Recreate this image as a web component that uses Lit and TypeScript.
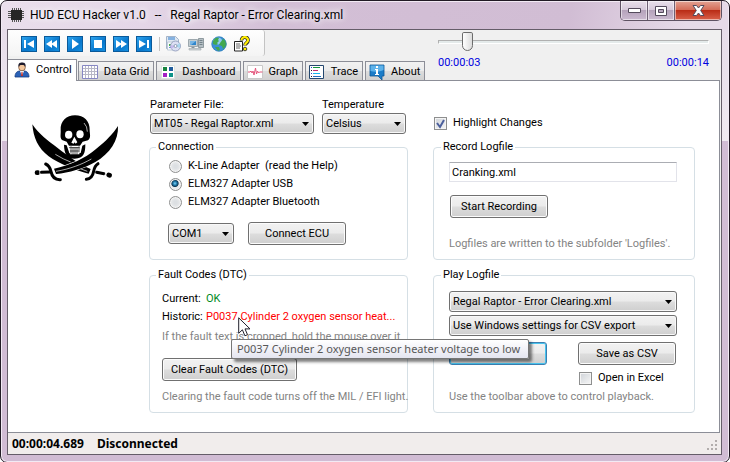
import { LitElement, html, css, svg } from "lit";
import { customElement, property, state } from "lit/decorators.js";
import { classMap } from "lit/directives/class-map.js";

const mediaGlyphs: [string, unknown][] = [
  ["First", svg`<path d="M3 4h2v8H3zM13 4v8L6 8z"/>`],
  ["Rewind", svg`<path d="M8 4v8L2 8zM13 4v8L7 8z"/>`],
  ["Play", svg`<path d="M5 3v10l7-5z"/>`],
  ["Stop", svg`<path d="M4 4h8v8H4z"/>`],
  ["Forward", svg`<path d="M3 4v8l6-4zM8 4v8l6-4z"/>`],
  ["Last", svg`<path d="M3 4v8l7-4zM11 4h2v8h-2z"/>`],
];

const toolGlyphs: [string, unknown][] = [
  ["Save log", svg`
    <path d="M1.500.5h9l3 3v9h-12z" fill="#dfe8f2" stroke="#8fa3bd" stroke-width=".8"/>
    <path d="M3 1h7v3H3z" fill="#86b2e0"/><path d="M2.500 6h7v8h-7z" fill="#f8fafc" stroke="#b3c1d2" stroke-width=".8"/>
    <path d="M4 8h2v2H4z" fill="#46b04a"/><path d="M4 11h2v1H4z" fill="#5a8fd6"/>
    <circle cx="10.500" cy="10" r="5" fill="#dcdff4" stroke="#8894b4" stroke-width=".8"/>
    <path d="M10.500 10l4-3a5 5 0 0 1 0 5z" fill="#a9d6ee"/><path d="M10.500 10l-4 3a5 5 0 0 1-1-4z" fill="#c5b9ec"/>
    <circle cx="10.500" cy="10" r="1.500" fill="#fff" stroke="#7787a4" stroke-width=".8"/>`],
  ["Computer", svg`
    <path d="M.5 3.500h9v7h-9z" fill="#c2ccd1" stroke="#8d999f" stroke-width=".8"/><path d="M2 5h6v4H2z" fill="#2f86cc"/>
    <path d="M2 5h6L3 9H2z" fill="#77b5e4"/><path d="M3.500 11h3v1h-3z" fill="#889299"/>
    <path d="M1 12.500h12v1.500H1z" fill="#d3d8da" stroke="#9aa4a9" stroke-width=".6"/>
    <path d="M10.500 2.500h5v9h-5z" fill="#b4bec3" stroke="#7e8a90" stroke-width=".8"/><path d="M11.500 4.500h3M11.500 6.500h3M11.500 8.500h3" stroke="#64737b" stroke-width=".8"/>`],
  ["Web", svg`
    <circle cx="8" cy="8" r="7.500" fill="#3a8fd6"/><ellipse cx="6.500" cy="5" rx="4.500" ry="3.500" fill="#8cc9f2"/>
    <path d="M2 5c2-4 5-4 6-3l-1 2 1 1-2 2 1 1-2 1-3-1zM9 7l3-4c3 1 4 5 3 7l-3 3-1-3-3-1zM4 11l4 0 1 3-2 1z" fill="#42a84f"/>
    <circle cx="8" cy="8" r="7.200" fill="none" stroke="#3580b4" stroke-width=".6"/>`],
  ["Help", svg`
    <path d="M.5 5.500h8v9.500h-8z" fill="#fff" stroke="#222"/><path d="M2 8h4M2 10h5M2 12h4" stroke="#555" stroke-width=".9"/>
    <path d="M7.500 4.500c0-5 7-4 6.500 0c0 2.500-3 2.500-3 5" fill="none" stroke="#222" stroke-width="3.600"/>
    <path d="M7.500 4.200c0-4.500 7-3.500 6.500 0c0 2.500-3 2.500-3 5" fill="none" stroke="#ffec00" stroke-width="2.200"/>
    <circle cx="11" cy="13" r="1.800" fill="#ffec00" stroke="#222" stroke-width=".8"/>`],
];

const tabs: [string, unknown][] = [
  ["Control", svg`
    <path d="M1 15c0-4 2-6 5-6h4c3 0 5 2 5 6z" fill="#2a62b8" stroke="#163c80" stroke-width=".8"/>
    <path d="M6 9l2 5 2-5z" fill="#fff"/><path d="M7.500 10h1l.5 4H7z" fill="#c03028"/>
    <circle cx="8" cy="5.500" r="3.300" fill="#f3c79d" stroke="#6b4326" stroke-width=".7"/>
    <path d="M4.400 5C4 1 6 .5 8 .5s4 .5 3.600 4.500L10 3H6z" fill="#1d1a2c"/>`],
  ["Data Grid", svg`
    <path d="M.5 1.500h15v13H.5z" fill="#fff" stroke="#8687c4"/>
    <path d="M3.500 2v12M6.500 2v12M9.500 2v12M12.500 2v12M1 4.500h14M1 7.500h14M1 10.500h14" stroke="#b7b7c6" fill="none"/>`],
  ["Dashboard", svg`
    <path d="M1.500 1.500h13v13h-13z" fill="#fff" stroke="#dce3e0"/>
    <path d="M3 3h4v4H3z" fill="#17843f"/><path d="M9 3h4v4H9z" fill="#205c9c"/>
    <path d="M3 9h4v4H3z" fill="#a31fc4"/><path d="M9 9h4v4H9z" fill="#0d9488"/>`],
  ["Graph", svg`
    <path d="M.5 1.500h15v13H.5z" fill="#fff" stroke="#c9c9c9"/>
    <path d="M1 8h2l1-1 1 2 1-2 1 4 1.500-7 1 6 1-3 1 2 1-1h3" fill="none" stroke="#e4567c"/>`],
  ["Trace", svg`
    <path d="M.5 1.500h14v13H.5z" fill="#fff" stroke="#24476e"/>
    <path d="M2 3.500h1M2 9.500h1" stroke="#2a3fd0"/><path d="M2 6.500h1M2 12.500h1" stroke="#222"/>
    <path d="M4 3.500h7" stroke="#12963a"/><path d="M4 6.500h5" stroke="#c03070"/><path d="M4 9.500h7" stroke="#18b6ee"/><path d="M4 12.500h8" stroke="#1f6fc0"/>`],
  ["About", svg`
    <path d="M1 1h14v11h-2v4l-4-4H1z" fill="#1b7cc8" stroke="#0e5794" stroke-width=".8"/>
    <path d="M1.500 1.500h13V6c-4 2-9 2-13 1z" fill="#5db2ea"/>
    <path d="M7 2h2v2H7zM6 5h3v5h1v1H6v-1h1V6H6z" fill="#fff"/>`],
];

@customElement("drop-list")
export class DropList extends LitElement {
  @property() label = "";
  @property({ attribute: false }) options: string[] = [];
  static styles = css`
    :host { display: grid; min-width: 0; }
    select {
      grid-area: 1 / 1; appearance: none; box-sizing: border-box; width: 100%; height: 21px; margin: 0;
      padding: 1px 16px 0 3px; border: 1px solid #707070; border-radius: 3px; color: #000;
      font: 11px/16px Roboto, "Liberation Sans", sans-serif;
      background: linear-gradient(#f2f2f2, #ebebeb 49%, #dddddd 51%, #cfcfcf);
      box-shadow: inset 0 0 0 1px #f8f8f8;
    }
    svg { grid-area: 1 / 1; place-self: center end; margin-right: 5px; pointer-events: none; }
  `;
  render() {
    return html`<select aria-label=${this.label}>${this.options.map((o) => html`<option>${o}</option>`)}</select>
      <svg width="7" height="4" viewBox="0 0 7 4"><path d="M0 0h7L3.500 4z"/></svg>`;
  }
}

@customElement("app-root")
export class AppRoot extends LitElement {
  @state() private activeTab = "Control";

  static styles = css`
    :host { display: block; background: #fff; color: #000; font: 11px/16px Roboto, "Liberation Sans", sans-serif; }
    * { box-sizing: border-box; }
    .window {
      display: flex; flex-direction: column; min-height: 100vh; padding: 0 7px 7px 6px;
      border: 1px solid #211a24; border-radius: 7px;
      background: linear-gradient(100deg, #eadfec 0, #e4d6e7 20%, #d3bfd6 38%, #d1bdd4 78%, #e6dae8 94%) 0 0 / 100% 28px no-repeat,
        linear-gradient(#e4d8e7, #f0eaf1 140px, #d1bcd4 140px);
      box-shadow: inset 0 0 0 1px #f2eaf4;
    }
    .titlebar { display: flex; align-items: flex-start; height: 28px; padding-left: 1px; }
    .chip { margin-top: 6px; flex: none; }
    .title {
      flex: 1; min-width: 0; margin: 0; padding: 4px 0 4px 6px; white-space: pre; overflow: hidden;
      font: 12px/20px Roboto, sans-serif;
      text-shadow: 0 0 6px #fff, 0 0 9px #fff;
    }
    .caption { display: flex; border: 1px solid #5e5263; border-top: 0; border-radius: 0 0 5px 5px; overflow: hidden; }
    .caption button {
      width: 27px; height: 19px; padding: 0; border: 0; border-right: 1px solid #6d5f73; display: grid; place-items: center;
      background: linear-gradient(#e9e0eb, #d5c8d9 48%, #b5a3bb 50%, #cbbad0);
      box-shadow: inset 0 0 0 1px #ffffff88;
    }
    .caption .close { width: 46px; border-right: 0; background: linear-gradient(#e3a394, #d46a55 48%, #ba2d17 50%, #d9614a); }
    .client { flex: 1; display: flex; flex-direction: column; border: 1px solid #655d69; background: #f0f0f0; }
    .header { display: grid; grid-template-columns: 430px minmax(0, 1fr); }
    .toolbar {
      display: flex; gap: 7px; align-items: center; width: 257px; height: 26px; padding: 2px 0 0 13px; margin-bottom: 3px;
      border-right: 1px solid #c3c3c3; border-radius: 0 3px 3px 0; background: linear-gradient(#fefefe, #f4f4f4);
    }
    .toolbar button { width: 16px; height: 16px; padding: 0; border: 0; background: none; flex: none; }
    .toolbar .media { border: 1px solid #0a5a9a; background: linear-gradient(135deg, #2da4ee, #0877cc 60%, #1590e0); }
    .toolbar svg { display: block; }
    .media svg { margin: -1px; fill: #fff; }
    .divider { width: 1px; height: 14px; margin-right: -2px; background: #c2c2c2; }
    .tabs { display: flex; align-items: flex-end; gap: 2px; }
    .tab {
      display: flex; align-items: center; gap: 6px; height: 19px; padding: 1px 4px 0 3px; margin: 0; color: #000;
      border: 1px solid #8c8e97; border-bottom: 0; font: inherit; white-space: nowrap;
      background: linear-gradient(#f2f2f2, #ebebeb 49%, #dddddd 51%, #d0d0d0);
    }
    .tab.active { height: 22px; padding: 0 4px 2px 6px; margin: 0 -1px -1px 0; border-left: 0; background: #fff; position: relative; }
    .seek { padding: 2px 12px 0 0; color: #0000e0; }
    .seek input { appearance: none; display: block; width: 100%; height: 20px; margin: 0; background: none; }
    .seek input::-webkit-slider-runnable-track { height: 4px; border: 1px solid #fff; border-top-color: #b0b0b0; border-left-color: #b0b0b0; background: #e4eaea; }
    .seek input::-webkit-slider-thumb {
      appearance: none; width: 11px; height: 19px; margin-top: -9px; background: linear-gradient(90deg, #fff, #dcdcdc);
      border: 1px solid #6c6c6c; border-radius: 2px 2px 6px 6px;
    }
    .times { display: flex; justify-content: space-between; padding-top: 3px; }
    .page { flex: 1; margin-right: 1px; padding: 16px 24px 19px 0; border: solid #8c8e97; border-width: 1px 1px 1px 0; background: #fff; display: grid; grid-template-columns: 141px minmax(0, 1fr); align-content: start; }
    .logo { margin: 16px 0 0 22px; }
    .pair { display: grid; grid-template-columns: minmax(0, 259fr) minmax(0, 262fr); gap: 8px 25px; }
    .params { display: grid; grid-template-columns: 164fr 84fr; gap: 0 8px; padding: 0 2px 0 1px; }
    .highlight { align-self: end; padding: 0 0 3px 1px; }
    .check { display: flex; align-items: center; gap: 6px; }
    .groups { margin-top: 6px; }
    fieldset { min-width: 0; margin: 0; border: 1px solid #d5dfe5; border-radius: 4px; }
    fieldset.upper { min-height: 120px; }
    fieldset.lower { min-height: 145px; }
    legend { margin-left: -8px; padding: 0 2px; line-height: 14px; }
    fieldset.connection { padding: 3px 18px 0; }
    .connection legend { margin-left: -12px; }
    .radio { display: flex; align-items: center; gap: 6px; height: 18px; padding-left: 1px; }
    input[type="radio"] {
      appearance: none; width: 13px; height: 13px; margin: 0; border: 1px solid #8e8f8f; border-radius: 50%;
      background: radial-gradient(#dcdfe2 20%, #f4f4f4); box-shadow: inset 0 0 0 1px #f4f4f4;
    }
    input[type="radio"]:checked { background: radial-gradient(circle at 45% 40%, #7fd4f7 0, #1a74a5 22%, #123a55 36%, #e6e9eb 46%); }
    input[type="checkbox"] {
      appearance: none; display: grid; width: 13px; height: 13px; margin: 0; border: 1px solid #8e8f8f;
      background: linear-gradient(135deg, #cfd3d8, #f6f6f6); box-shadow: inset 0 0 0 1px #f4f4f4;
    }
    .tick { display: grid; }
    .tick > * { grid-area: 1 / 1; }
    .tick svg { pointer-events: none; }
    .push {
      width: 98px; height: 23px; margin: 0; padding: 1px 0 0; border: 1px solid #707070; border-radius: 3px; font: inherit; color: #000; white-space: nowrap;
      background: linear-gradient(#f2f2f2, #ebebeb 49%, #dddddd 51%, #cfcfcf); box-shadow: inset 0 0 0 1px #fcfcfc;
    }
    .push.wide { width: 135px; }
    .push.focused { border-color: #3c7fb1; box-shadow: inset 0 0 0 1px #48c4ee; }
    .connect { display: flex; align-items: center; gap: 14px; margin-top: 11px; }
    .connect drop-list { width: 66px; }
    .hint { margin: 0; color: #838383; white-space: nowrap; }
    fieldset.record { padding: 8px 17px 0 15px; }
    .record input { display: block; width: 100%; height: 20px; padding: 0 2px; border: 1px solid #e2e3ea; border-top-color: #abadb3; font: inherit; color: #000; outline: 0; }
    .record .push { display: block; margin: 13px 0 18px 1px; }
    fieldset.faults { padding: 8px 0 0 12px; }
    .faults legend { margin-left: -6px; }
    .faults dl { display: grid; grid-template-columns: 44px minmax(0, 1fr); margin: 0 0 3px; line-height: 18px; white-space: nowrap; }
    .faults dd { margin: 0; }
    .ok { color: #008a1e; }
    .error { position: relative; color: #f00; }
    .faults .push { display: block; margin: 13px 0 8px; }
    .tooltip {
      position: absolute; left: 25px; top: 31px; z-index: 2; height: 20px; padding: 0 8px 0 5px; border: 1px solid #767676; border-radius: 2px;
      font: 11px/18px "Noto Sans", sans-serif; color: #575757; background: linear-gradient(#fff, #e4e5f0); box-shadow: 3px 3px 3px #00000080;
    }
    .cursor { position: absolute; left: 32px; top: 9px; z-index: 3; }
    fieldset.play { padding: 9px 17px 0 15px; }
    .play .lists { display: grid; gap: 3px; margin-bottom: 6px; }
    .play .actions { display: flex; justify-content: space-between; padding-right: 1px; }
    .play .check { width: 98px; margin: 5px 0 3px auto; }
    .status { display: flex; gap: 13px; align-items: center; height: 21px; padding: 0 4px; background: #f1edec; font: bold 12px/16px "Noto Sans", sans-serif; }
    .grip { margin: 4px -2px 0 auto; }
  `;

  private icon(glyph: unknown) {
    return html`<svg width="16" height="16" viewBox="0 0 16 16">${glyph}</svg>`;
  }

  private skull() {
    return html`<svg class="logo" width="90" height="70" viewBox="90 68 270 210" role="img" aria-label="Skull and crossed sabres">
      <path d="M97 102C116 130 144 152 172 172C205 198 240 222 272 236L266 250C225 240 176 220 146 198C114 174 100 142 97 102Z"/>
      <path d="M166 192Q190 207 212 215M232 232L262 243" stroke="#fff" stroke-width="2" fill="none"/>
      <path d="M354 107C356 150 330 190 286 215C248 236 208 247 168 251L162 235C210 225 254 205 288 176C318 152 338 132 354 107Z" stroke="#fff" stroke-width="4" paint-order="stroke"/>
      <path d="M168 243C210 236 246 222 274 206" stroke="#fff" stroke-width="2" fill="none"/>
      <g fill="none" stroke="#000" stroke-linecap="round">
        <path d="M137 221Q149 226 153 244Q158 269 181 268" stroke-width="9"/>
        <path d="M294 220Q284 226 281 243Q277 266 259 267" stroke-width="9"/>
        <path d="M124 246L150 245M290 246L312 250" stroke-width="9"/>
        <path d="M111 247h3M326 254l3 1" stroke-width="14"/>
      </g>
      <path d="M119 239v15M318 243l-4 15" stroke="#fff" stroke-width="2"/>
      <path d="M182 120C180 92 200 75 225 75C252 75 270 92 269 120C269 132 274 142 264 150L248 154L240 166L207 166L200 154L186 149C179 142 183 132 182 120Z"/>
      <path d="M192 163L200 165L208 188L242 188L247 166L256 162C256 188 252 204 224 205C199 204 193 190 192 163Z"/>
      <path d="M204 168h38l-4 24h-28z" fill="#fff"/>
      <path d="M207 172h32M210 182h26M213 168v22M219 170v22M225 170v22M231 170v22M237 168v18" stroke="#000" stroke-width="2"/>
      <ellipse cx="206" cy="133" rx="11" ry="12" fill="#fff"/><ellipse cx="240" cy="132" rx="11" ry="12" fill="#fff"/>
      <path d="M223 139L214 157L221 160L224 156L227 160L232 156Z" fill="#fff"/>
      <path d="M252 98Q262 108 262 124" stroke="#fff" stroke-width="2" fill="none"/>
    </svg>`;
  }

  private check(label: string, checked: boolean) {
    return html`<label class="check"><span class="tick"><input type="checkbox" .checked=${checked}>
      ${checked ? html`<svg width="13" height="13" viewBox="0 0 13 13"><path d="M3 6l3 4 4-7" fill="none" stroke="#4b5f9c" stroke-width="2"/></svg>` : ""}
      </span>${label}</label>`;
  }

  render() {
    return html`<div class="window">
      <header class="titlebar">
        <svg class="chip" width="16" height="16" viewBox="0 0 16 16">
          <path d="M4.500 1v14M6.500 1v14M8.500 1v14M10.500 1v14M12.500 1v14M0 4.500h16M0 6.500h16M0 8.500h16M0 10.500h16" stroke="#555" fill="none"/>
          <path d="M3 3h11v10H3z" fill="#262626"/>
        </svg>
        <h1 class="title">HUD ECU Hacker v1.0   --   Regal Raptor - Error Clearing.xml</h1>
        <div class="caption">
          <button aria-label="Minimize"><svg width="13" height="6" viewBox="0 0 13 6"><path d="M.5.5h12v4H.5z" fill="#fff" stroke="#544b5c"/></svg></button>
          <button aria-label="Maximize"><svg width="12" height="10" viewBox="0 0 12 10"><path d="M.5.5h11v9H.5zM3.500 3.500v3h5v-3z" fill="#fff" fill-rule="evenodd" stroke="#544b5c"/></svg></button>
          <button class="close" aria-label="Close"><svg width="13" height="11" viewBox="0 0 13 11"><path d="M1 .5h3.500l2 2.500 2-2.500H12L8.700 5.500 12 10.500H8.500l-2-2.500-2 2.500H1l3.300-5z" fill="#fff" stroke="#544b5c"/></svg></button>
        </div>
      </header>
      <div class="client">
        <div class="header">
          <div>
            <div class="toolbar">
              ${mediaGlyphs.map(([n, g]) => html`<button class="media" aria-label=${n}>${this.icon(g)}</button>`)}
              <span class="divider"></span>
              ${toolGlyphs.map(([n, g]) => html`<button aria-label=${n}>${this.icon(g)}</button>`)}
            </div>
            <nav class="tabs" role="tablist">
              ${tabs.map(([n, g]) => html`<button role="tab" class=${classMap({ tab: true, active: n === this.activeTab })}
                aria-selected=${n === this.activeTab} @click=${() => (this.activeTab = n)}>${this.icon(g)}${n}</button>`)}
            </nav>
          </div>
          <div class="seek">
            <input type="range" aria-label="Playback position" min="0" max="1000" value="88">
            <div class="times"><span>00:00:03</span><span>00:00:14</span></div>
          </div>
        </div>
        <main class="page">
          ${this.skull()}
          <div>
            <div class="pair">
              <div class="params">
                <span>Parameter File:</span><span>Temperature</span>
                <drop-list label="Parameter File" .options=${["MT05 - Regal Raptor.xml"]}></drop-list>
                <drop-list label="Temperature" .options=${["Celsius", "Fahrenheit"]}></drop-list>
              </div>
              <div class="highlight">${this.check("Highlight Changes", true)}</div>
            </div>
            <div class="pair groups">
              <fieldset class="upper connection">
                <legend>Connection</legend>
                <label class="radio"><input type="radio" name="adapter">K-Line Adapter&nbsp; (read the Help)</label>
                <label class="radio"><input type="radio" name="adapter" checked>ELM327 Adapter USB</label>
                <label class="radio"><input type="radio" name="adapter">ELM327 Adapter Bluetooth</label>
                <div class="connect">
                  <drop-list label="Port" .options=${["COM1"]}></drop-list>
                  <button class="push">Connect ECU</button>
                </div>
              </fieldset>
              <fieldset class="upper record">
                <legend>Record Logfile</legend>
                <input type="text" aria-label="Logfile name" value="Cranking.xml">
                <button class="push">Start Recording</button>
                <p class="hint">Logfiles are written to the subfolder 'Logfiles'.</p>
              </fieldset>
              <fieldset class="lower faults">
                <legend>Fault Codes (DTC)</legend>
                <dl>
                  <dt>Current:</dt><dd class="ok">OK</dd>
                  <dt>Historic:</dt>
                  <dd class="error">P0037 Cylinder 2 oxygen sensor heat...
                    <div class="tooltip" role="tooltip">P0037 Cylinder 2 oxygen sensor heater voltage too low</div>
                    <svg class="cursor" width="13" height="20" viewBox="0 0 13 20"><path d="M.7.8v15.500l3.700-3.500 2.500 6 2.600-1.100-2.500-5.800h5z" fill="#fff" stroke="#20202c"/></svg>
                  </dd>
                </dl>
                <p class="hint">If the fault text is cropped, hold the mouse over it</p>
                <button class="push wide">Clear Fault Codes (DTC)</button>
                <p class="hint">Clearing the fault code turns off the MIL / EFI light.</p>
              </fieldset>
              <fieldset class="lower play">
                <legend>Play Logfile</legend>
                <div class="lists">
                  <drop-list label="Logfile" .options=${["Regal Raptor - Error Clearing.xml"]}></drop-list>
                  <drop-list label="CSV export settings" .options=${["Use Windows settings for CSV export"]}></drop-list>
                </div>
                <div class="actions">
                  <button class="push focused">Play Logfile</button>
                  <button class="push">Save as CSV</button>
                </div>
                ${this.check("Open in Excel", false)}
                <p class="hint">Use the toolbar above to control playback.</p>
              </fieldset>
            </div>
          </div>
        </main>
        <footer class="status">
          <span>00:00:04.689</span><span>Disconnected</span>
          <svg class="grip" width="12" height="12" viewBox="0 0 12 12"><path d="M8 0h2v2H8zM4 4h2v2H4zM8 4h2v2H8zM0 8h2v2H0zM4 8h2v2H4zM8 8h2v2H8z" fill="#b2adac"/></svg>
        </footer>
      </div>
    </div>`;
  }
}
